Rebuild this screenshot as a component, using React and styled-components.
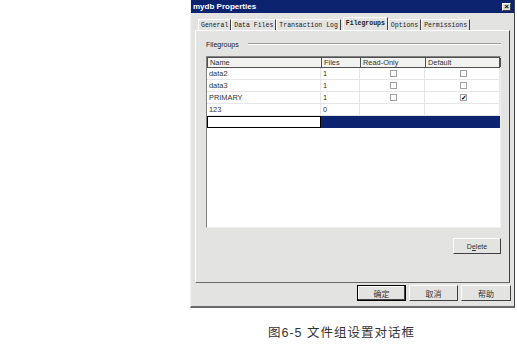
import React from "react";
import styled, { createGlobalStyle } from "styled-components";

const GlobalStyle = createGlobalStyle`
  html, body {
    margin: 0;
    padding: 0;
    background: #ffffff;
  }
`;

const Page = styled.div`
  width: 517px;
  height: 346px;
  overflow: hidden;
  background: #ffffff;
`;

const Dialog = styled.div`
  margin-left: 190px;
  width: 325px;
  height: 308px;
  box-sizing: border-box;
  background: #e3e3e1;
  border-left: 1px solid #f4f4f4;
  border-right: 1px solid #404040;
  border-bottom: 2px solid #6a6a6a;
  display: flex;
  flex-direction: column;
`;

const TitleBar = styled.div`
  height: 13px;
  background: #0c2470;
  display: flex;
  align-items: center;
  justify-content: space-between;
  padding: 0 3px 0 2px;
  font-family: "Liberation Sans", Arial, sans-serif;
  font-weight: bold;
  font-size: 8px;
  color: #ffffff;
`;

const CloseButton = styled.div`
  width: 9px;
  height: 8px;
  box-sizing: border-box;
  background: #dcdcd8;
  border-top: 1px solid #ffffff;
  border-left: 1px solid #ffffff;
  border-right: 1px solid #404040;
  border-bottom: 1px solid #404040;
  color: #000;
  font-size: 8px;
  line-height: 6px;
  text-align: center;
`;

const TabRow = styled.div`
  display: flex;
  align-items: flex-end;
  margin: 4px 0 0 7px;
  height: 13px;
`;

const Tab = styled.div`
  font-family: "Liberation Mono", "Courier New", monospace;
  font-size: 6.5px;
  font-weight: ${(p) => (p.$active ? "bold" : "normal")};
  color: #222;
  padding: 0 2px;
  height: ${(p) => (p.$active ? 13 : 11)}px;
  line-height: ${(p) => (p.$active ? 12 : 11)}px;
  margin-left: ${(p) => (p.$active ? 2 : 0)}px;
  border-left: 1px solid #ffffff;
  border-top: 1px solid #ffffff;
  border-right: 1px solid #404040;
  box-sizing: border-box;
  white-space: nowrap;
`;

const Panel = styled.div`
  margin-left: 4px;
  width: 315px;
  height: 253px;
  box-sizing: border-box;
  border-top: 1px solid #ffffff;
  border-left: 1px solid #ffffff;
  border-right: 1px solid #404040;
  border-bottom: 1px solid #6a6a6a;
  padding: 8px 8px 0 10px;
  display: flex;
  flex-direction: column;
`;

const GroupHeader = styled.div`
  display: flex;
  align-items: center;
  height: 10px;
  font-family: "Liberation Sans", Arial, sans-serif;
  font-size: 7px;
  color: #222;
  gap: 9px;
`;

const GroupLine = styled.div`
  flex: 1;
  height: 0;
  border-top: 1px solid #9a9a9a;
  border-bottom: 1px solid #ffffff;
`;

const GridBox = styled.div`
  margin-top: 7px;
  width: 295px;
  height: 172px;
  box-sizing: border-box;
  background: #ffffff;
  border-top: 1px solid #808080;
  border-left: 1px solid #808080;
  border-right: 1px solid #f0f0f0;
  border-bottom: 1px solid #f0f0f0;
  font-family: "Liberation Sans", Arial, sans-serif;
  font-size: 7.4px;
  color: #333;
`;

const GridRow = styled.div`
  display: grid;
  grid-template-columns: 114px 39px 65px 75px;
  height: ${(p) => (p.$header ? 11 : 12)}px;
  box-sizing: border-box;
  background: ${(p) => (p.$header ? "#f2f2f0" : "transparent")};
  border: ${(p) => (p.$header ? "1px solid #505050" : "none")};
  border-bottom: 1px solid ${(p) => (p.$header ? "#505050" : "#e6e6e6")};
`;

const Cell = styled.div`
  box-sizing: border-box;
  padding-left: 2px;
  line-height: ${(p) => (p.$header ? 9 : 11)}px;
  border-right: 1px solid ${(p) => (p.$header ? "#505050" : "#e6e6e6")};
  display: flex;
  align-items: center;
  justify-content: ${(p) => (p.$center ? "center" : "flex-start")};
  white-space: nowrap;
  overflow: hidden;
`;

const EditRow = styled.div`
  display: grid;
  grid-template-columns: 114px 179px;
  height: 12px;
`;

const EditCell = styled.div`
  box-sizing: border-box;
  background: #ffffff;
  border: 1px solid #000000;
`;

const SelectedCell = styled.div`
  background: #0c2470;
`;

const Check = styled.div`
  width: 7px;
  height: 7px;
  box-sizing: border-box;
  border: 1px solid #a0a0a0;
  background: #ffffff;
  font-size: 7px;
  line-height: 5px;
  text-align: center;
  color: #000;
  font-weight: bold;
`;

const DeleteRow = styled.div`
  display: flex;
  justify-content: flex-end;
  margin-top: 10px;
`;

const Button = styled.div`
  width: ${(p) => p.$w || 49}px;
  height: 16px;
  box-sizing: border-box;
  background: #e3e3e1;
  border-top: 1px solid #ffffff;
  border-left: 1px solid #ffffff;
  border-right: 1px solid #404040;
  border-bottom: 1px solid #404040;
  display: flex;
  align-items: center;
  justify-content: center;
  font-family: "Liberation Sans", "Noto Sans CJK SC", sans-serif;
  font-size: ${(p) => (p.$cjk ? 8 : 7)}px;
  color: #333;
`;

const DefaultButton = styled(Button)`
  border: 1px solid #000;
  box-shadow: inset -1px -1px 0 #404040, inset 1px 1px 0 #ffffff;
`;

const ButtonRow = styled.div`
  display: flex;
  justify-content: flex-end;
  gap: 3px;
  margin-top: 2px;
  padding-right: 3px;
`;

const Caption = styled.div`
  margin-top: 14px;
  padding-left: 268px;
  font-family: "Liberation Sans", "Noto Sans CJK SC", sans-serif;
  font-size: 12.5px;
  color: #333;
  letter-spacing: 1px;
`;

const rows = [
  { name: "data2", files: "1", ro: false, def: false },
  { name: "data3", files: "1", ro: false, def: false },
  { name: "PRIMARY", files: "1", ro: false, def: true },
  { name: "123", files: "0" },
];

const tabs = ["General", "Data Files", "Transaction Log", "Filegroups", "Options", "Permissions"];

export default function App() {
  return (
    <Page>
      <GlobalStyle />
      <Dialog>
        <TitleBar>
          <span>mydb Properties</span>
          <CloseButton>×</CloseButton>
        </TitleBar>
        <TabRow>
          {tabs.map((t) => (
            <Tab key={t} $active={t === "Filegroups"}>
              {t}
            </Tab>
          ))}
        </TabRow>
        <Panel>
          <GroupHeader>
            <span>Filegroups</span>
            <GroupLine />
          </GroupHeader>
          <GridBox>
            <GridRow $header>
              <Cell $header>Name</Cell>
              <Cell $header>Files</Cell>
              <Cell $header>Read-Only</Cell>
              <Cell $header>Default</Cell>
            </GridRow>
            {rows.map((r) => (
              <GridRow key={r.name}>
                <Cell>{r.name}</Cell>
                <Cell>{r.files}</Cell>
                <Cell $center>{r.ro !== undefined && <Check />}</Cell>
                <Cell $center>{r.def !== undefined && <Check>{r.def ? "✓" : ""}</Check>}</Cell>
              </GridRow>
            ))}
            <EditRow>
              <EditCell />
              <SelectedCell />
            </EditRow>
          </GridBox>
          <DeleteRow>
            <Button $w={48}>
              D<u>e</u>lete
            </Button>
          </DeleteRow>
        </Panel>
        <ButtonRow>
          <DefaultButton $cjk>确定</DefaultButton>
          <Button $cjk>取消</Button>
          <Button $cjk $w={50}>帮助</Button>
        </ButtonRow>
      </Dialog>
      <Caption>图6-5 文件组设置对话框</Caption>
    </Page>
  );
}
